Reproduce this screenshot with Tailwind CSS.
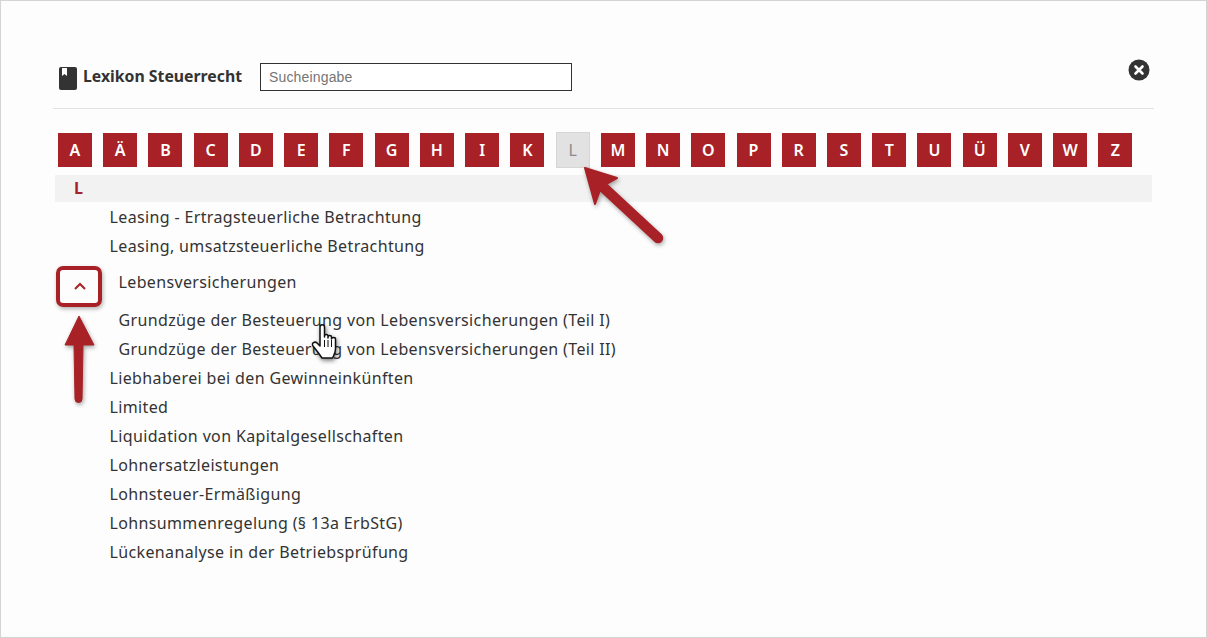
<!DOCTYPE html>
<html lang="de">
<head>
    <meta charset="UTF-8">
    <title>Lexikon Steuerrecht</title>
    <script src="https://cdn.jsdelivr.net/npm/@tailwindcss/browser@4"></script>
</head>
<body class="bg-[#fdfdfd]">
    <div class="relative w-[1207px] h-[638px] overflow-hidden border border-[#d4d4d4] font-['Noto_Sans','Open_Sans',sans-serif] text-[#333]">

        <!-- Header -->
        <div class="flex items-start ml-[52px] mr-[52px] h-[108px] pt-[62px] border-b border-[#e2e2e2] relative">
            <svg class="ml-[6px] mt-[4px]" width="18" height="23" viewBox="0 0 18 23">
                <path d="M2 0h14a2 2 0 0 1 2 2v19a2 2 0 0 1-2 2H2a2 2 0 0 1-2-2V2a2 2 0 0 1 2-2z" fill="#333"/>
                <path d="M3 1h5v8L5.500 7 3 9z" fill="#fff"/>
            </svg>
            <span class="ml-[6px] mt-[1px] text-[15.8px] leading-[24px] font-bold text-[#333]">Lexikon Steuerrecht</span>
            <input placeholder="Sucheingabe" class="ml-[18px] w-[312px] h-[28px] border border-[#333] bg-white px-2 font-['Liberation_Sans',sans-serif] text-[14px] tracking-[0.15px] placeholder:text-[#757575]">
            <svg class="absolute right-[4px] top-[58px]" width="22" height="22" viewBox="0 0 22 22">
                <circle cx="11" cy="11" r="10.5" fill="#333"/>
                <path d="M7.500 7.500l7 7M14.500 7.500l-7 7" stroke="#fff" stroke-width="2.600" stroke-linecap="round"/>
            </svg>
        </div>

        <!-- Alphabet -->
        <div class="flex gap-[11.235px] ml-[57px] mt-[24px] text-white text-[16px] font-semibold">
            <a class="w-[34px] h-[34px] flex items-center justify-center bg-[#a82126]">A</a>
            <a class="w-[34px] h-[34px] flex items-center justify-center bg-[#a82126]">Ä</a>
            <a class="w-[34px] h-[34px] flex items-center justify-center bg-[#a82126]">B</a>
            <a class="w-[34px] h-[34px] flex items-center justify-center bg-[#a82126]">C</a>
            <a class="w-[34px] h-[34px] flex items-center justify-center bg-[#a82126]">D</a>
            <a class="w-[34px] h-[34px] flex items-center justify-center bg-[#a82126]">E</a>
            <a class="w-[34px] h-[34px] flex items-center justify-center bg-[#a82126]">F</a>
            <a class="w-[34px] h-[34px] flex items-center justify-center bg-[#a82126]">G</a>
            <a class="w-[34px] h-[34px] flex items-center justify-center bg-[#a82126]">H</a>
            <a class="w-[34px] h-[34px] flex items-center justify-center bg-[#a82126]">I</a>
            <a class="w-[34px] h-[34px] flex items-center justify-center bg-[#a82126]">K</a>
            <a class="w-[34px] h-[36px] -mt-px flex items-center justify-center bg-[#e2e2e2] border border-[#d6d6d6] text-[#8a8a8a] font-normal">L</a>
            <a class="w-[34px] h-[34px] flex items-center justify-center bg-[#a82126]">M</a>
            <a class="w-[34px] h-[34px] flex items-center justify-center bg-[#a82126]">N</a>
            <a class="w-[34px] h-[34px] flex items-center justify-center bg-[#a82126]">O</a>
            <a class="w-[34px] h-[34px] flex items-center justify-center bg-[#a82126]">P</a>
            <a class="w-[34px] h-[34px] flex items-center justify-center bg-[#a82126]">R</a>
            <a class="w-[34px] h-[34px] flex items-center justify-center bg-[#a82126]">S</a>
            <a class="w-[34px] h-[34px] flex items-center justify-center bg-[#a82126]">T</a>
            <a class="w-[34px] h-[34px] flex items-center justify-center bg-[#a82126]">U</a>
            <a class="w-[34px] h-[34px] flex items-center justify-center bg-[#a82126]">Ü</a>
            <a class="w-[34px] h-[34px] flex items-center justify-center bg-[#a82126]">V</a>
            <a class="w-[34px] h-[34px] flex items-center justify-center bg-[#a82126]">W</a>
            <a class="w-[34px] h-[34px] flex items-center justify-center bg-[#a82126]">Z</a>
        </div>

        <!-- Section letter -->
        <div class="ml-[54px] mr-[54px] mt-[7px] h-[27px] bg-[#f2f2f2] pl-[19px] text-[16px] leading-[27px] font-bold text-[#a82126]">L</div>

        <!-- Entries -->
        <div class="ml-[108.500px] mt-[1px] text-[16px] leading-[29px] tracking-[0.36px] whitespace-nowrap">
            <div>Leasing - Ertragsteuerliche Betrachtung</div>
            <div>Leasing, umsatzsteuerliche Betrachtung</div>
            <div class="pl-[9px] pt-[7px] pb-[9px]">Lebensversicherungen</div>
            <div class="pl-[9px]">Grundzüge der Besteuerung von Lebensversicherungen (Teil I)</div>
            <div class="pl-[9px]">Grundzüge der Besteuerung von Lebensversicherungen (Teil II)</div>
            <div>Liebhaberei bei den Gewinneinkünften</div>
            <div>Limited</div>
            <div>Liquidation von Kapitalgesellschaften</div>
            <div>Lohnersatzleistungen</div>
            <div>Lohnsteuer-Ermäßigung</div>
            <div>Lohnsummenregelung (§ 13a ErbStG)</div>
            <div>Lückenanalyse in der Betriebsprüfung</div>
        </div>

        <!-- Annotation: highlighted toggle -->
        <div class="absolute left-[55px] top-[265px] w-[46px] h-[41px] flex items-center justify-center rounded-[7px] border-[4px] border-[#a82126] shadow-[1px_2px_4px_rgba(0,0,0,0.3)]">
            <svg class="ml-[2px]" width="14" height="9" viewBox="0 0 14 9"><path d="M2 7l5-5 5 5" fill="none" stroke="#a82126" stroke-width="2"/></svg>
        </div>

        <!-- Annotation arrows -->
        <svg class="absolute left-0 top-0 drop-shadow-[1px_2px_2px_rgba(0,0,0,0.35)]" width="1207" height="638" viewBox="0 0 1207 638">
            <path d="M584 167l32 10-11 6 55 51a4 4 0 0 1-6 6l-55-51-5 14z" fill="#a82126" stroke="#a82126" stroke-width="2" stroke-linejoin="round"/>
            <path d="M78 315l15 29H82l-1 54a3.500 3.500 0 0 1-7 0l-1-54H64z" fill="#a82126" stroke="#a82126" stroke-linejoin="round"/>
        </svg>

        <!-- Hand cursor -->
        <svg class="absolute left-[310px] top-[322px] drop-shadow-[1px_2px_2px_rgba(0,0,0,0.5)]" width="30" height="36" viewBox="0 0 30 36">
            <path d="M9 4c0-3 4.500-3 4.500 0v10-1c0-2 3.500-2 3.500 0v2-1c0-2 3.500-2 3.500 0v2c0-2 4-2 4 0v10c0 4-1.500 6-3 9H11c-2-3-4-6-9-12-2-3 2-5 4-3l3 3z" fill="#fff" stroke="#111" stroke-width="1.500" stroke-linejoin="round"/>
            <path d="M13.500 17v7M17 17v7M20.500 17v7" stroke="#111" stroke-width="1"/>
        </svg>
    </div>
</body>
</html>
